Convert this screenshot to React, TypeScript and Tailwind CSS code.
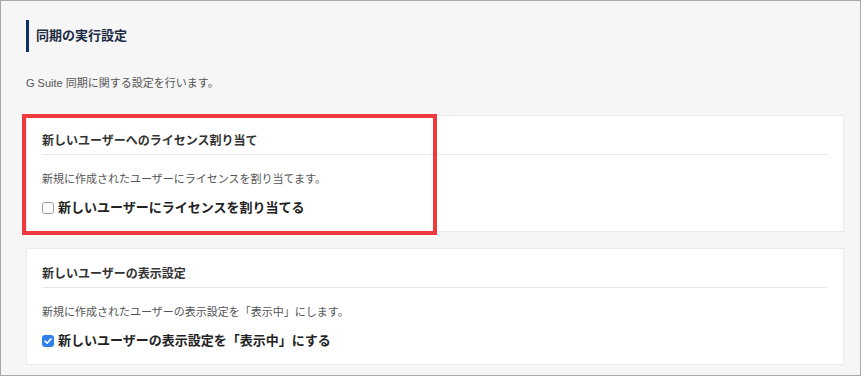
const font = { fontFamily: '"Liberation Sans", "Noto Sans CJK JP", sans-serif' };

const CheckIcon = () => (
  <svg viewBox="0 0 12 12" className="w-[12px] h-[12px]">
    <path d="M3 6.2 L5.1 8.2 L9 3.9" fill="none" stroke="white" strokeWidth="1.6" strokeLinecap="round" strokeLinejoin="round" />
  </svg>
);

const SettingCard = ({
  title,
  description,
  label,
  checked,
}: {
  title: string;
  description: string;
  label: string;
  checked: boolean;
}) => (
  <div className="bg-white border border-[#ebebeb] px-[15px]">
    <div className="h-[39px] pt-[17px] border-b border-[#e8e8e8]">
      <p className="text-[12px] leading-[16px] font-bold text-[#333]">{title}</p>
    </div>
    <p className="mt-[16px] text-[11px] leading-[16px] text-[#555]">{description}</p>
    <label className="mt-[12px] mb-[14px] flex items-center gap-[4px]">
      {checked ? (
        <span className="w-[12px] h-[12px] rounded-[3px] bg-[#2f80ed] flex items-center justify-center">
          <CheckIcon />
        </span>
      ) : (
        <span className="w-[12px] h-[12px] rounded-[3px] border border-[#9a9a9a] bg-white" />
      )}
      <span className="text-[13px] leading-[18px] font-bold text-[#222]">{label}</span>
    </label>
  </div>
);

export default function App() {
  return (
    <div style={font} className="w-[861px] h-[376px] border border-[#a8a8a8] bg-[#f6f6f6] pl-[25px] pr-[16px] pt-[19px]">
      <div className="h-[32px] border-l-[3px] border-[#0b3264] pl-[7px] flex items-center">
        <h1 className="text-[13px] font-bold text-[#1c2c44]">同期の実行設定</h1>
      </div>
      <p className="mt-[23px] text-[11px] leading-[16px] text-[#555]">G Suite 同期に関する設定を行います。</p>
      <div className="mt-[24px] relative">
        <SettingCard
          title="新しいユーザーへのライセンス割り当て"
          description="新規に作成されたユーザーにライセンスを割り当てます。"
          label="新しいユーザーにライセンスを割り当てる"
          checked={false}
        />
        <div className="absolute left-[-4px] top-[-1px] w-[415px] h-[121px] border-[4px] border-[#ef3a3d] pointer-events-none" />
      </div>
      <div className="mt-[16px]">
        <SettingCard
          title="新しいユーザーの表示設定"
          description="新規に作成されたユーザーの表示設定を「表示中」にします。"
          label="新しいユーザーの表示設定を「表示中」にする"
          checked={true}
        />
      </div>
    </div>
  );
}
